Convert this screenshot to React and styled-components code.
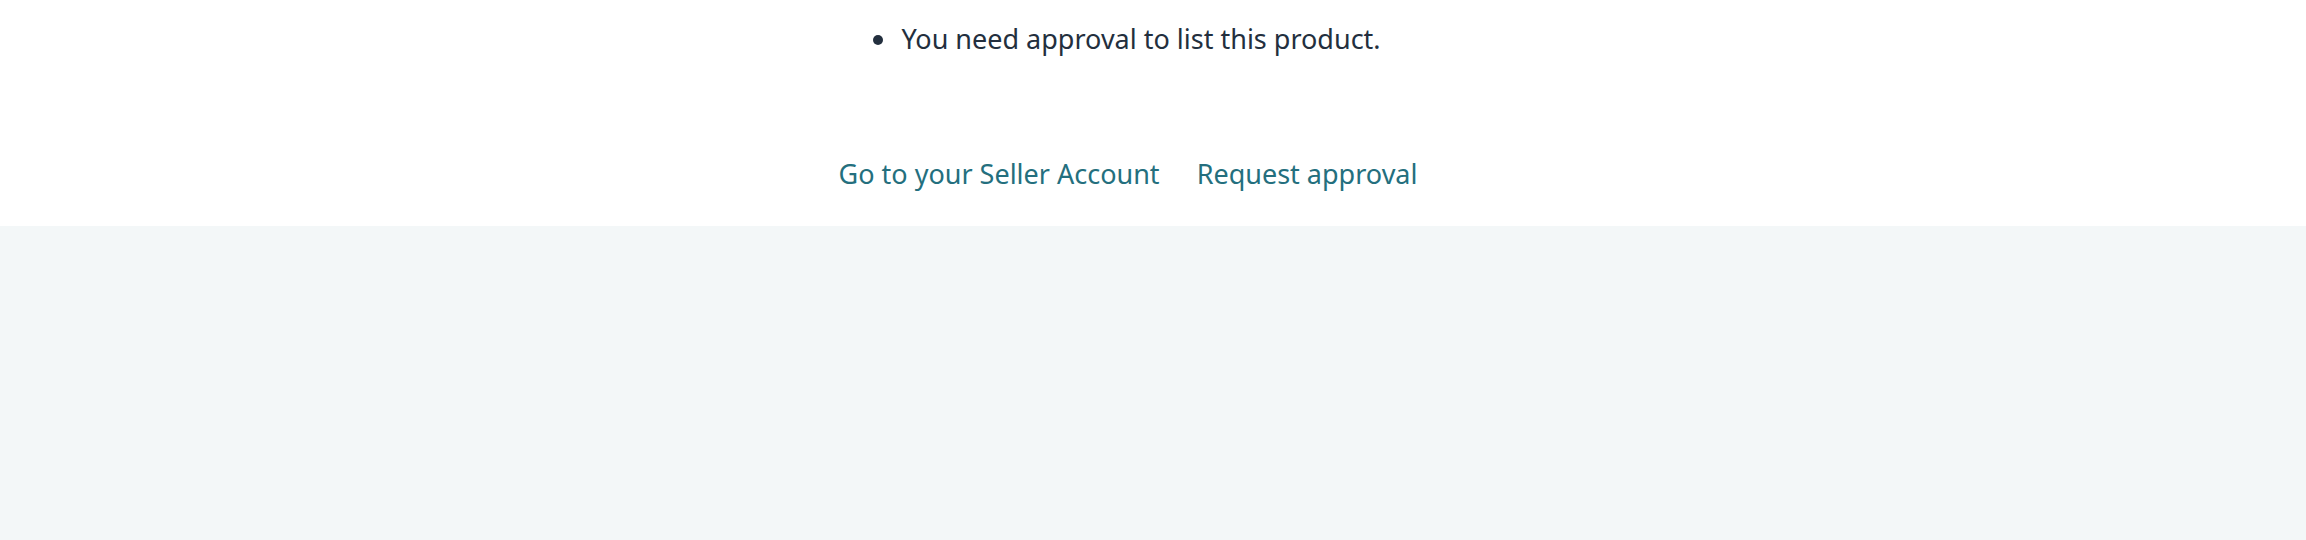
import styled, { createGlobalStyle } from "styled-components";

const Global = createGlobalStyle`
  html, body {
    margin: 0;
    padding: 0;
    background: #ffffff;
  }
  body {
    font-family: "Noto Sans", "Open Sans", Arial, sans-serif;
  }
`;

const Page = styled.div`
  display: flex;
  flex-direction: column;
  height: 540px;
`;

const Notice = styled.section`
  height: 226px;
  background: #ffffff;
  display: flex;
  flex-direction: column;
  align-items: center;
  padding-right: 50px;
`;

const Reasons = styled.ul`
  margin: 19px 0 0;
  padding: 0 0 0 24px;
  color: #232f3e;
  font-size: 27px;
  line-height: 40px;
  list-style: disc;
`;

const Reason = styled.li`
  padding-left: 2px;
`;

const Actions = styled.div`
  display: flex;
  gap: 37px;
  margin-top: 95px;
`;

const ActionLink = styled.a`
  color: #246f7e;
  font-size: 27px;
  line-height: 40px;
  text-decoration: none;
  cursor: pointer;
`;

const Footer = styled.div`
  flex: 1;
  background: #f3f7f8;
`;

export default function App() {
  return (
    <>
      <Global />
      <Page>
        <Notice>
          <Reasons>
            <Reason>You need approval to list this product.</Reason>
          </Reasons>
          <Actions>
            <ActionLink>Go to your Seller Account</ActionLink>
            <ActionLink>Request approval</ActionLink>
          </Actions>
        </Notice>
        <Footer />
      </Page>
    </>
  );
}
